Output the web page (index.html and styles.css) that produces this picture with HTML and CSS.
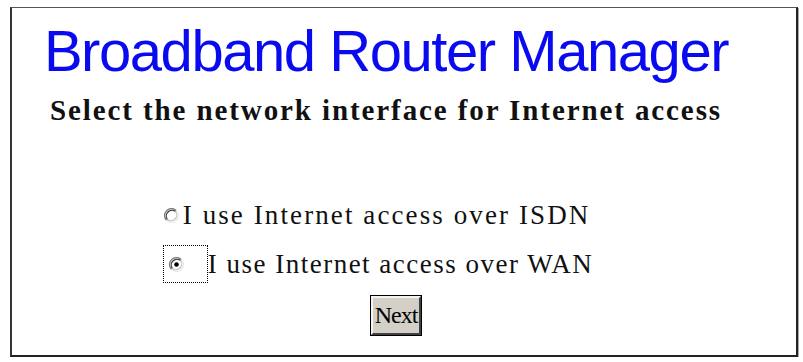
FILE: index.html
```html
<!DOCTYPE html>
<html>
<head>
<meta charset="utf-8">
<title>Broadband Router Manager</title>
<link rel="stylesheet" href="styles.css">
</head>
<body>
<div class="frame">
  <div class="content">
    <h1 class="title">Broadband Router Manager</h1>
    <h2 class="subtitle">Select the network interface for Internet access</h2>
    <div class="choices">
      <label class="choice">
        <span class="focus">
          <svg class="radio" width="15" height="15" viewBox="0 0 15 15">
            <circle cx="7.5" cy="7.5" r="6" fill="#fff"/>
            <path d="M2.6 12.4 A6.9 6.9 0 0 1 12.4 2.6" fill="none" stroke="#7a7a7a" stroke-width="1.3"/>
            <path d="M3.5 11.5 A5.7 5.7 0 0 1 11.5 3.5" fill="none" stroke="#3a3a3a" stroke-width="1.2"/>
            <path d="M12.4 2.6 A6.9 6.9 0 0 1 2.6 12.4" fill="none" stroke="#e8e8e8" stroke-width="1.3"/>
            <path d="M11.5 3.5 A5.7 5.7 0 0 1 3.5 11.5" fill="none" stroke="#c8c4bc" stroke-width="1.2"/>
          </svg>
        </span>
        <span class="label">I use Internet access over ISDN</span>
      </label>
      <label class="choice">
        <span class="focus focused">
          <svg class="radio" width="15" height="15" viewBox="0 0 15 15">
            <circle cx="7.5" cy="7.5" r="6" fill="#fff"/>
            <path d="M2.6 12.4 A6.9 6.9 0 0 1 12.4 2.6" fill="none" stroke="#7a7a7a" stroke-width="1.3"/>
            <path d="M3.5 11.5 A5.7 5.7 0 0 1 11.5 3.5" fill="none" stroke="#3a3a3a" stroke-width="1.2"/>
            <path d="M12.4 2.6 A6.9 6.9 0 0 1 2.6 12.4" fill="none" stroke="#e8e8e8" stroke-width="1.3"/>
            <path d="M11.5 3.5 A5.7 5.7 0 0 1 3.5 11.5" fill="none" stroke="#c8c4bc" stroke-width="1.2"/>
            <circle cx="7.5" cy="7.5" r="2.3" fill="#000"/>
          </svg>
        </span>
        <span class="label wan">I use Internet access over WAN</span>
      </label>
    </div>
    <button class="next" type="button">Next</button>
  </div>
</div>
</body>
</html>
```
FILE: styles.css
```css
html, body {
  margin: 0;
  padding: 0;
  background: #ffffff;
}

.frame {
  box-sizing: border-box;
  margin: 7px 0 0 10px;
  width: 788px;
  height: 350px;
  border-top: 1px solid #555;
  border-left: 2px solid #333;
  border-right: 2px solid #222;
  border-bottom: 2px solid #222;
  box-shadow: 1px 1px 0 #aaa;
}

.content {
  display: flex;
  flex-direction: column;
  align-items: center;
  padding-right: 36px;
}

.title {
  margin: 14px 0 0 0;
  font-family: "Liberation Sans", Arial, sans-serif;
  font-weight: normal;
  font-size: 58px;
  line-height: 58px;
  letter-spacing: -1.45px;
  color: #0a0af0;
}

.subtitle {
  margin: 16px 0 0 0;
  font-family: "Liberation Serif", "Times New Roman", serif;
  font-weight: bold;
  font-size: 29px;
  line-height: 28px;
  letter-spacing: 1.9px;
  color: #111;
}

.choices {
  display: flex;
  flex-direction: column;
  align-items: flex-start;
  margin: 72px 16px 0 0;
  gap: 11px;
}

.choice {
  display: flex;
  align-items: center;
  height: 38px;
}

.focus {
  display: flex;
  align-items: center;
  justify-content: flex-start;
  box-sizing: border-box;
  width: 18px;
  height: 38px;
  border: 1px dotted transparent;
}

.focus.focused {
  width: 45px;
  border-color: #000;
  padding-left: 5px;
}

.label {
  font-family: "Liberation Serif", "Times New Roman", serif;
  font-size: 27px;
  line-height: 27px;
  letter-spacing: 2.1px;
  color: #111;
  padding-left: 2px;
}

.label.wan {
  letter-spacing: 1.5px;
  padding-left: 0;
}

.next {
  margin: 13px 0 0 20px;
  box-sizing: border-box;
  width: 50px;
  height: 39px;
  padding: 0;
  font-family: "Liberation Serif", "Times New Roman", serif;
  font-size: 24px;
  letter-spacing: -1px;
  color: #000;
  background: #d4d0c8;
  border-top: 2px solid #f4f4f0;
  border-left: 2px solid #f4f4f0;
  border-right: 2px solid #404040;
  border-bottom: 2px solid #404040;
  outline: 1px solid #000;
  outline-offset: 0;
}
```
